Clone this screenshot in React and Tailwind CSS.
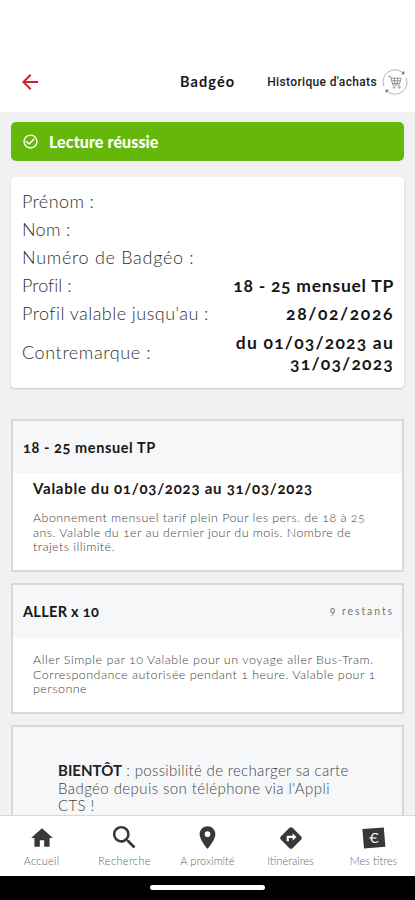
import { MdHome, MdSearch, MdLocationOn, MdDirections, MdCheckCircleOutline, MdArrowBack } from "react-icons/md";

function CartIcon() {
  return (
    <svg viewBox="0 0 26 26" className="h-[26px] w-[26px]" fill="none" stroke="#a3a39c" strokeLinecap="round">
      <path d="M1.6 16.5A12 12 0 0 1 21 3.8M24.4 9.5A12 12 0 0 1 5 22.2" strokeWidth="0.8" />
      <path d="M20.2 5.2l2-.4-.5-2.2zM5.8 20.8l-2 .3.5 2.2z" strokeWidth="0.6" fill="#666" stroke="#666" />
      <path d="M6.5 7.5h2.2l2.1 8.5h7.3M9.3 9.2h9.9l-1.7 5.3h-6.9M12.3 9.2l.6 5.3M15.8 9.2l-.4 5.3M9.8 11.8h8.5" strokeWidth="0.9" stroke="#8c8c86" />
      <circle cx="12" cy="18.4" r="1" strokeWidth="0.9" />
      <circle cx="17" cy="18.4" r="1" strokeWidth="0.9" />
    </svg>
  );
}

function TicketIcon() {
  return (
    <svg viewBox="0 0 26 24" className="h-6 w-[26px]">
      <path d="M1.4 3L22.8 1.4 24.4 20.8 3 22.4z" fill="#38383a" />
      <text x="13" y="17" textAnchor="middle" fontSize="14" fill="#fff" fontFamily="Lato, sans-serif" className="lining-nums">€</text>
    </svg>
  );
}

function InfoRow({ label, labelClass, value, valueClass }) {
  return (
    <div className="flex h-[28.2px] items-center justify-between whitespace-nowrap">
      <span className={`text-[18px] font-light text-[#303030] ${labelClass}`}>{label}</span>
      {value && <span className={`text-[17.5px] font-bold ${valueClass}`}>{value}</span>}
    </div>
  );
}

function NavItem({ icon, label, labelClass }) {
  return (
    <div className="flex w-[83px] flex-col items-center pt-[7px] text-[#38383a]">
      <div className="flex h-[29px] items-center">{icon}</div>
      <span className={`mt-[2px] whitespace-nowrap text-[11px] font-light leading-[14px] text-[#666] ${labelClass}`}>{label}</span>
    </div>
  );
}

export default function App() {
  return (
    <div className="flex h-[900px] w-[415px] flex-col overflow-hidden bg-[#f1f1f1] font-['Lato',sans-serif] text-[#161616] oldstyle-nums">
      <header className="grid h-[112px] shrink-0 grid-cols-[180px_56px_1fr] items-center bg-white pt-[52px]">
        <MdArrowBack className="ml-[18px] h-6 w-6 text-[#cc2229]" />
        <h1 className="whitespace-nowrap text-[14.5px] font-bold tracking-[1.1px]">Badgéo</h1>
        <div className="flex items-center justify-end pr-[7px] font-['Roboto',sans-serif] text-[12px] font-medium">
          <span className="mr-[5px] whitespace-nowrap tracking-[0.35px] text-[#222]">Historique d'achats</span>
          <CartIcon />
        </div>
      </header>

      <main className="min-h-0 flex-1 overflow-hidden px-[11px] pt-[10px]">
        <div className="flex h-[39px] items-center rounded-[5px] bg-[#65b80a] pl-[11px] text-white">
          <MdCheckCircleOutline className="h-[17px] w-[17px]" />
          <span className="ml-[10px] whitespace-nowrap text-[16px] font-black tracking-[0.1px]">Lecture réussie</span>
        </div>

        <section className="mt-4 h-[211px] rounded-[4px] bg-white px-[11px] pt-[10px] shadow-[0_1px_2px_rgba(0,0,0,0.18)]">
          <InfoRow label="Prénom :" labelClass="tracking-[0.4px]" />
          <InfoRow label="Nom :" labelClass="tracking-[0.3px]" />
          <InfoRow label="Numéro de Badgéo :" labelClass="tracking-[0.7px]" />
          <InfoRow label="Profil :" labelClass="tracking-[0.05px]" value="18 - 25 mensuel TP" valueClass="tracking-[0.75px] -mr-[1px]" />
          <InfoRow label="Profil valable jusqu'au :" labelClass="tracking-[0.46px]" value="28/02/2026" valueClass="tracking-[1.6px] -mr-[1px]" />
          <div className="flex items-center justify-between whitespace-nowrap pt-[4px] leading-[21px]">
            <span className="text-[18px] font-light tracking-[0.6px] text-[#303030]">Contremarque :</span>
            <span className="-mr-[1px] text-right text-[17.5px] font-bold tracking-[1.2px]">du 01/03/2023 au<br />31/03/2023</span>
          </div>
        </section>

        <section className="mt-[31px] h-[153px] border-2 border-[#d6d8d9] bg-white">
          <div className="flex h-[52px] items-center bg-[#f5f7f9] px-[10px]">
            <h2 className="whitespace-nowrap pt-[2px] text-[14.5px] font-bold tracking-[0.6px]">18 - 25 mensuel TP</h2>
          </div>
          <div className="whitespace-nowrap pl-[20px] pt-[5px]">
            <p className="text-[15px] font-bold leading-[20px] tracking-[0.75px]">Valable du 01/03/2023 au 31/03/2023</p>
            <p className="mt-[13px] text-[12.5px] font-light leading-[14.7px] tracking-[0.43px] text-[#444]">
              Abonnement mensuel tarif plein Pour les pers. de 18 à 25<br />
              ans. Valable du 1er au dernier jour du mois. Nombre de<br />
              trajets illimité.
            </p>
          </div>
        </section>

        <section className="mt-[11px] h-[131px] border-2 border-[#d6d8d9] bg-white">
          <div className="flex h-[53px] items-center justify-between whitespace-nowrap bg-[#f5f7f9] pl-[10px] pr-[8px]">
            <h2 className="text-[14.5px] font-bold tracking-[0.3px]">ALLER x 10</h2>
            <span className="text-[10.5px] tracking-[1.9px] text-[#777]">9 restants</span>
          </div>
          <p className="whitespace-nowrap pl-[20px] pt-[15px] text-[12.5px] font-light leading-[14.7px] tracking-[0.47px] text-[#444]">
            <span className="tracking-[0.52px]">Aller Simple par 10 Valable pour un voyage aller Bus-Tram.</span><br />
            Correspondance autorisée pendant 1 heure. Valable pour 1<br />
            personne
          </p>
        </section>

        <section className="mt-[11px] h-[120px] border-2 border-[#d6d8d9] bg-[#f5f7f9]">
          <p className="whitespace-nowrap pl-[45px] pt-[35px] text-[15px] font-light leading-[17.6px] tracking-[0.42px] text-[#444]">
            <span className="tracking-[0.33px]"><b className="font-bold tracking-[0px] text-[#222]">BIENTÔT</b> : possibilité de recharger sa carte</span><br />
            Badgéo depuis son téléphone via l'Appli<br />
            CTS !
          </p>
        </section>
      </main>

      <nav className="flex h-[61px] shrink-0 border-t border-[#d8d8d8] bg-white">
        <NavItem icon={<MdHome className="h-[26px] w-[26px]" />} label="Accueil" labelClass="tracking-[0.25px]" />
        <NavItem icon={<MdSearch className="h-[31px] w-[31px]" />} label="Recherche" labelClass="tracking-[0.35px]" />
        <NavItem icon={<MdLocationOn className="h-[27px] w-[27px]" />} label="A proximité" labelClass="tracking-[0.05px]" />
        <NavItem icon={<MdDirections className="h-[26px] w-[26px]" />} label="Itinéraires" />
        <NavItem icon={<TicketIcon />} label="Mes titres" />
      </nav>
      <footer className="flex h-6 shrink-0 justify-center bg-black pt-[9px]">
        <div className="h-[5px] w-[115px] rounded-full bg-white" />
      </footer>
    </div>
  );
}
